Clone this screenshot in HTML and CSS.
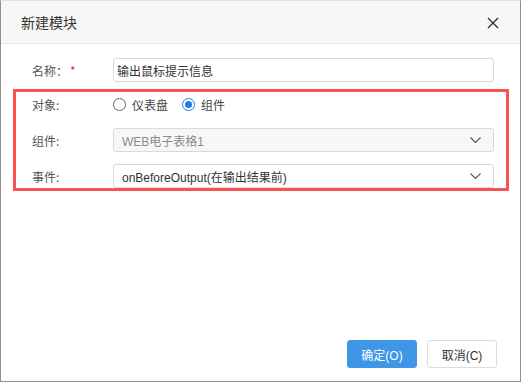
FILE: index.html
```html
<!DOCTYPE html>
<html lang="zh-CN">
  <head>
    <meta charset="UTF-8" />
    <title>新建模块</title>
    <link rel="stylesheet" href="styles.css">
  </head>
  <body>
    <div class="dialog">
      <div class="dialog-header">
        <span class="dialog-title">新建模块</span>
        <svg class="close" width="12" height="12" viewBox="0 0 12 12">
          <path d="M1 1 L11 11 M11 1 L1 11" stroke="#333" stroke-width="1.4" fill="none" />
        </svg>
      </div>
      <div class="dialog-body">
        <div class="row row-plain">
          <label class="label">名称：<span class="required">*</span></label>
          <div class="field input">输出鼠标提示信息</div>
        </div>
        <div class="highlight">
          <div class="row">
            <label class="label">对象:</label>
            <div class="radios">
              <span class="radio"></span><span class="radio-text">仪表盘</span>
              <span class="radio checked"></span><span class="radio-text">组件</span>
            </div>
          </div>
          <div class="row">
            <label class="label">组件:</label>
            <div class="field select disabled">
              <span>WEB电子表格1</span>
              <svg class="chevron" width="11" height="6" viewBox="0 0 11 6">
                <path d="M0.5 0.5 L5.5 5.5 L10.5 0.5" stroke="#555" stroke-width="1.1" fill="none" />
              </svg>
            </div>
          </div>
          <div class="row">
            <label class="label">事件:</label>
            <div class="field select">
              <span>onBeforeOutput(在输出结果前)</span>
              <svg class="chevron" width="11" height="6" viewBox="0 0 11 6">
                <path d="M0.5 0.5 L5.5 5.5 L10.5 0.5" stroke="#555" stroke-width="1.1" fill="none" />
              </svg>
            </div>
          </div>
        </div>
      </div>
      <div class="dialog-footer">
        <button class="btn btn-primary">确定(O)</button>
        <button class="btn">取消(C)</button>
      </div>
    </div>
  </body>
</html>
```

FILE: styles.css
```css
body {
  margin: 0;
  background: #fff;
  font-family: "Liberation Sans", "Noto Sans CJK SC", sans-serif;
  font-size: 12px;
  color: #333;
}
.dialog {
  box-sizing: border-box;
  width: 521px;
  height: 382px;
  border: 1px solid #8f8f8f;
  border-top-color: #e2e2e2;
  display: flex;
  flex-direction: column;
  background: #fff;
}
.dialog-header {
  height: 42px;
  background: #f7f7f7;
  border-bottom: 1px solid #e6e6e6;
  display: flex;
  align-items: center;
  justify-content: space-between;
  padding: 0 21px 0 20px;
}
.dialog-title {
  font-size: 14px;
  color: #333;
  font-family: "Noto Sans CJK SC", sans-serif;
}
.close {
  margin-top: 1px;
}
.dialog-body {
  flex: 1;
  padding: 14px 0 0 12px;
}
.row {
  display: flex;
  align-items: center;
  height: 24px;
  margin-bottom: 12px;
}
.row:last-child {
  margin-bottom: 0;
}
.row-plain {
  width: 496px;
  box-sizing: border-box;
  padding-left: 19px;
  margin-bottom: 7px;
}
.label {
  width: 81px;
  flex: none;
  color: #555;
  font-family: "Noto Sans CJK SC", sans-serif;
}
.required {
  color: #e53935;
  margin-left: 2px;
}
.field {
  box-sizing: border-box;
  width: 381px;
  height: 24px;
  border: 1px solid #d9d9d9;
  border-radius: 3px;
  display: flex;
  align-items: center;
  color: #333;
}
.input {
  padding-left: 3px;
}
.select {
  justify-content: space-between;
  padding: 0 12px 0 8px;
}
.disabled {
  background: #f7f7f7;
  color: #8a8a8a;
}
.highlight {
  width: 496px;
  box-sizing: border-box;
  border: 3px solid #fa5252;
  padding-left: 16px;
}
.radios {
  display: flex;
  align-items: center;
}
.radio {
  box-sizing: border-box;
  width: 13px;
  height: 13px;
  border: 1px solid #666;
  border-radius: 50%;
  position: relative;
}
.radio.checked {
  border-color: #1a7fe0;
}
.radio.checked::after {
  content: "";
  position: absolute;
  left: 2px;
  top: 2px;
  width: 7px;
  height: 7px;
  border-radius: 50%;
  background: #1a7fe0;
}
.radio-text {
  margin: 0 14px 0 6px;
  color: #444;
}
.dialog-footer {
  display: flex;
  justify-content: flex-end;
  gap: 10px;
  padding: 0 23px 13px 0;
}
.btn {
  box-sizing: border-box;
  width: 70px;
  height: 28px;
  border: 1px solid #dcdcdc;
  border-radius: 3px;
  background: #fff;
  color: #333;
  font-family: "Liberation Sans", "Noto Sans CJK SC", sans-serif;
  font-size: 12px;
  padding: 0;
}
.btn-primary {
  background: #3d96e6;
  border-color: #3d96e6;
  color: #fff;
}
```
